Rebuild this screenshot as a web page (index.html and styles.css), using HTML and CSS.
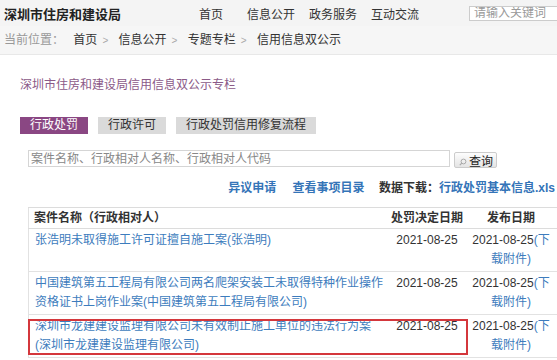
FILE: index.html
```html
<!DOCTYPE html>
<html lang="zh-CN">
<head>
    <meta charset="UTF-8">
    <meta name="viewport" content="width=device-width, initial-scale=1.0">
    <title>深圳市住房和建设局信用信息双公示专栏</title>
    <link rel="stylesheet" href="styles.css">
</head>
<body>
    <div class="topbar">
        <div class="site-title">深圳市住房和建设局</div>
        <nav class="nav">
            <a href="#">首页</a>
            <a href="#">信息公开</a>
            <a href="#">政务服务</a>
            <a href="#">互动交流</a>
        </nav>
        <input class="top-search" type="text" placeholder="请输入关键词">
    </div>

    <div class="crumbs">
        <span class="crumbs-label">当前位置：</span>
        <a href="#">首页</a><span class="sep">&gt;</span>
        <a href="#">信息公开</a><span class="sep">&gt;</span>
        <a href="#">专题专栏</a><span class="sep">&gt;</span>
        <a href="#">信用信息双公示</a>
    </div>

    <div class="main">
        <div class="column-title">深圳市住房和建设局信用信息双公示专栏</div>

        <div class="tabs">
            <a class="tab active" href="#">行政处罚</a>
            <a class="tab" href="#">行政许可</a>
            <a class="tab" href="#">行政处罚信用修复流程</a>
        </div>

        <form class="search-row">
            <input class="search-input" type="text" placeholder="案件名称、行政相对人名称、行政相对人代码">
            <button class="search-btn" type="button">
                <svg width="8" height="8" viewBox="0 0 8 8"><circle cx="4.5" cy="3.5" r="2.4" fill="none" stroke="#aaa" stroke-width="1"/><line x1="2.8" y1="5.2" x2="0.8" y2="7.2" stroke="#aaa" stroke-width="1.2"/></svg>查询
            </button>
        </form>

        <div class="links">
            <a href="#">异议申请</a>
            <a href="#">查看事项目录</a>
            <span class="dl-label">数据下载：</span><a href="#" class="dl-file">行政处罚基本信息.xls</a>
        </div>

        <table class="cases">
            <colgroup>
                <col class="col-name">
                <col class="col-date">
                <col class="col-pub">
            </colgroup>
            <thead>
                <tr>
                    <th class="name">案件名称（行政相对人）</th>
                    <th>处罚决定日期</th>
                    <th>发布日期</th>
                </tr>
            </thead>
            <tbody>
                <tr>
                    <td class="name"><a href="#">张浩明未取得施工许可证擅自施工案(张浩明)</a></td>
                    <td class="date">2021-08-25</td>
                    <td class="date">2021-08-25<a href="#">(下</a><br><a href="#">载附件)</a></td>
                </tr>
                <tr>
                    <td class="name"><a href="#">中国建筑第五工程局有限公司两名爬架安装工未取得特种作业操作资格证书上岗作业案(中国建筑第五工程局有限公司)</a></td>
                    <td class="date">2021-08-25</td>
                    <td class="date">2021-08-25<a href="#">(下</a><br><a href="#">载附件)</a></td>
                </tr>
                <tr>
                    <td class="name marked"><a href="#">深圳市龙建建设监理有限公司未有效制止施工单位的违法行为案(深圳市龙建建设监理有限公司)</a><span class="highlight"></span></td>
                    <td class="date">2021-08-25</td>
                    <td class="date">2021-08-25<a href="#">(下</a><br><a href="#">载附件)</a></td>
                </tr>
            </tbody>
        </table>
    </div>
</body>
</html>
```

FILE: styles.css
```css
body {
    margin: 0;
    width: 557px;
    overflow: hidden;
    font-family: "Liberation Sans", "Noto Sans CJK SC", sans-serif;
    font-size: 12px;
    color: #333;
    background: #fff;
}

a {
    text-decoration: none;
}

/* top bar */
.topbar {
    display: flex;
    align-items: center;
    height: 26px;
    padding-left: 4px;
    background: #f4f4f4;
    white-space: nowrap;
}
.site-title {
    flex-shrink: 0;
    font-size: 13px;
    font-weight: bold;
    color: #222;
    width: 195px;
}
.nav {
    display: flex;
    flex-shrink: 0;
}
.nav a {
    color: #333;
    margin-right: 14px;
}
.nav a:first-child {
    margin-right: 24px;
}
.nav a:last-child {
    margin-right: 50px;
}
.top-search {
    flex-shrink: 0;
    box-sizing: border-box;
    width: 110px;
    height: 15px;
    padding: 0 4px;
    border: 1px solid #ccc;
    font-family: inherit;
    font-size: 12px;
    background: #fff;
}
.top-search::placeholder {
    color: #999;
}

/* breadcrumb */
.crumbs {
    height: 28px;
    line-height: 28px;
    padding-left: 4px;
    background: #f6f6f6;
    border-bottom: 1px solid #e8e8e8;
}
.crumbs-label {
    color: #999;
    margin-right: 6px;
}
.crumbs a {
    color: #333;
}
.crumbs .sep {
    color: #aaa;
    font-size: 10px;
    margin: 0 7px 0 5px;
}

/* main */
.main {
    padding-left: 20px;
}
.column-title {
    margin-top: 20px;
    line-height: 20px;
    color: #8b5a88;
}
.tabs {
    display: flex;
    margin-top: 22px;
}
.tab {
    height: 17px;
    line-height: 17px;
    padding: 0 10px;
    margin-right: 10px;
    background: #dadada;
    color: #333;
}
.tab.active {
    background: #8a4783;
    color: #fff;
}

.search-row {
    display: flex;
    align-items: flex-start;
    margin: 16px 0 0 8px;
}
.search-input {
    box-sizing: border-box;
    width: 422px;
    height: 17px;
    padding: 0 2px;
    border: 1px solid #d5d5d5;
    font-family: inherit;
    font-size: 12px;
}
.search-input::placeholder {
    color: #888;
}
.search-btn {
    box-sizing: border-box;
    display: flex;
    align-items: center;
    width: 43px;
    height: 16px;
    margin: 2px 0 0 4px;
    padding: 0 0 0 4px;
    border: 1px solid #ccc;
    border-radius: 2px;
    background: linear-gradient(#fdfdfd, #e4e4e4);
    font-family: inherit;
    font-size: 12px;
    color: #222;
}
.search-btn svg {
    margin: 3px 2px 0 0;
}

.links {
    margin-top: 12px;
    padding-right: 2px;
    line-height: 17px;
    text-align: right;
    font-weight: bold;
}
.links a {
    color: #3474b8;
    margin-left: 13px;
}
.links .dl-label {
    margin-left: 11px;
    color: #333;
}
.links a.dl-file {
    margin-left: 0;
}

/* table */
.cases {
    margin: 10px 0 0 8px;
    width: 528px;
    table-layout: fixed;
    border-collapse: collapse;
    border-left: 1px solid #e2e2e2;
}
.col-name { width: 360px; }
.col-date { width: 77px; }
.col-pub { width: 91px; }

.cases th {
    line-height: 20px;
    padding: 0;
    text-align: center;
    font-weight: bold;
    color: #333;
    border-top: 1px solid #dcdcdc;
    border-bottom: 1px solid #dcdcdc;
}
.cases th.name {
    text-align: left;
    padding-left: 5px;
}
.cases td {
    padding: 2px 6px;
    line-height: 19px;
    vertical-align: top;
    text-align: center;
    border-bottom: 1px solid #e2e2e2;
}
.cases td.name {
    padding: 2px 4px 2px 6px;
    text-align: left;
}
.cases td a {
    color: #3d7cbd;
}

.cases td.marked {
    position: relative;
}
.highlight {
    position: absolute;
    left: -1px;
    top: 4px;
    bottom: 2px;
    width: 436px;
    border: 2px solid #d4373c;
}
```
